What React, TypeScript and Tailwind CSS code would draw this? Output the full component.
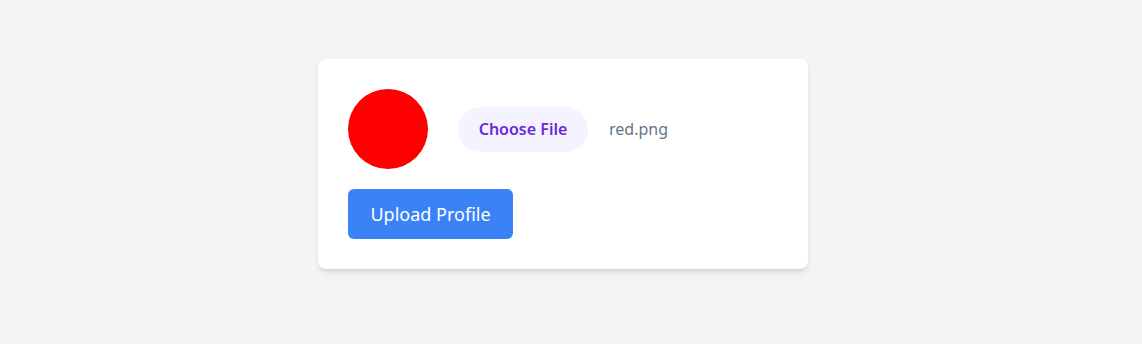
export default function App() {
  return (
    <div
      className="min-h-screen bg-[#f3f4f6] flex items-center justify-center pr-4 pb-4"
      style={{ fontFamily: '"Noto Sans", "Open Sans", sans-serif' }}
    >
      <div className="w-[490px] bg-white rounded-lg shadow-md p-[30px] flex flex-col gap-5">
        {/* Avatar + file picker */}
        <div className="flex items-center">
          <div className="w-20 h-20 rounded-full bg-[#ff0000] shrink-0" />
          <button
            type="button"
            className="ml-[30px] h-[45px] w-[130px] rounded-full bg-[#f5f3ff] text-[#6d28d9] text-base font-semibold"
          >
            Choose File
          </button>
          <span className="ml-[21px] text-base text-[#64748b]">red.png</span>
        </div>

        {/* Upload */}
        <div>
          <button
            type="button"
            className="h-[50px] w-[165px] rounded-md bg-[#3b82f6] text-white text-lg"
          >
            Upload Profile
          </button>
        </div>
      </div>
    </div>
  );
}
